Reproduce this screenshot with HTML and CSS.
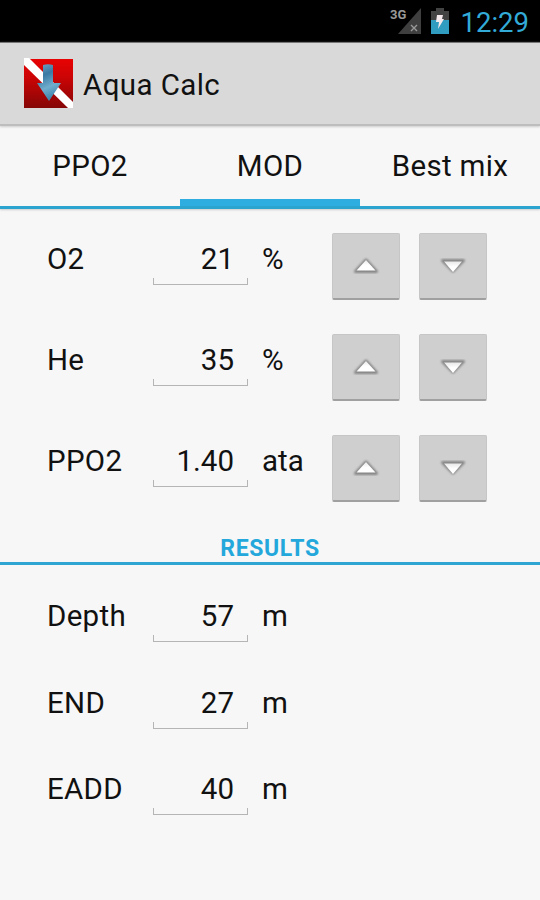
FILE: index.html
```html
<!DOCTYPE html>
<html lang="en">
<head>
  <meta charset="UTF-8" />
  <meta name="viewport" content="width=device-width, initial-scale=1.0" />
  <title>Aqua Calc</title>
  <link rel="stylesheet" href="styles.css">
</head>
<body>
  <div class="status-bar">
    <svg class="signal" width="32" height="28" viewBox="0 0 32 28">
      <path d="M31 1V27H8z" fill="#3f3f3f" />
      <path d="M21 18l6 6M27 18l-6 6" stroke="#999" stroke-width="1.4" />
      <text x="0" y="12" class="network">3G</text>
    </svg>
    <svg class="battery" width="18" height="27" viewBox="0 0 18 27">
      <path d="M0 3h5V0h8v3h5v10H0z" fill="#434343" />
      <path d="M0 12h18v14H0z" fill="#2f9cc0" />
      <path d="M6 7h6l-1 4h2l-6 10 1-7H5z" fill="#f4e9ec" />
    </svg>
    <span class="clock">12:29</span>
  </div>

  <header class="action-bar">
    <svg class="app-icon" width="51" height="51" viewBox="0 0 51 51">
      <defs>
        <linearGradient id="flag" x1="0" y1="0" x2="0" y2="1">
          <stop offset="0" stop-color="#e80203" />
          <stop offset="0.4" stop-color="#c90405" />
          <stop offset="1" stop-color="#850606" />
        </linearGradient>
        <linearGradient id="arrow" x1="0" y1="0" x2="0.3" y2="1">
          <stop offset="0" stop-color="#77a6c4" />
          <stop offset="0.35" stop-color="#3979a3" />
          <stop offset="0.7" stop-color="#70adcd" />
          <stop offset="1" stop-color="#4287ae" />
        </linearGradient>
      </defs>
      <rect x="1" y="1" width="49" height="49" fill="url(#flag)" />
      <path d="M1 0h5L50 44v6h-5L1 7z" fill="#fff" />
      <path d="M20 7q5-1.500 10 0V25h8L26 43 14 25h6z" fill="url(#arrow)" />
    </svg>
    <h1>Aqua Calc</h1>
  </header>

  <nav class="tabs">
    <div class="tab">PPO2</div>
    <div class="tab active">MOD</div>
    <div class="tab">Best mix</div>
  </nav>

  <svg class="symbols" width="0" height="0">
    <defs>
      <linearGradient id="shine" x1="0" y1="0" x2="0" y2="1">
        <stop offset="0" stop-color="#e8e8e8" />
        <stop offset="0.5" stop-color="#fff" />
      </linearGradient>
      <filter id="soft" x="-20%" y="-20%" width="140%" height="140%">
        <feGaussianBlur stdDeviation="0.8" />
      </filter>
      <symbol id="up" viewBox="0 0 28 20">
        <path d="M14 4L24.500 15.500H3.500z" fill="#858585" stroke="#858585" stroke-width="3" stroke-linejoin="round" filter="url(#soft)" />
        <path d="M14 4L23.500 14.500H4.500z" fill="url(#shine)" />
      </symbol>
      <symbol id="down" viewBox="0 0 28 20">
        <path d="M14 15L24.500 4.500H3.500z" fill="#858585" stroke="#858585" stroke-width="3" stroke-linejoin="round" filter="url(#soft)" />
        <path d="M14 16L23 5.500H5z" fill="url(#shine)" />
      </symbol>
    </defs>
  </svg>

  <main>
    <section class="inputs">
      <div class="row">
        <span class="label">O2</span>
        <span class="value">21</span>
        <span class="unit">%</span>
        <button><svg width="28" height="20"><use href="#up" /></svg></button>
        <button><svg width="28" height="20"><use href="#down" /></svg></button>
      </div>
      <div class="row">
        <span class="label">He</span>
        <span class="value">35</span>
        <span class="unit">%</span>
        <button><svg width="28" height="20"><use href="#up" /></svg></button>
        <button><svg width="28" height="20"><use href="#down" /></svg></button>
      </div>
      <div class="row">
        <span class="label">PPO2</span>
        <span class="value">1.40</span>
        <span class="unit">ata</span>
        <button><svg width="28" height="20"><use href="#up" /></svg></button>
        <button><svg width="28" height="20"><use href="#down" /></svg></button>
      </div>
    </section>

    <h2>RESULTS</h2>

    <section class="results">
      <div class="row">
        <span class="label">Depth</span>
        <span class="value">57</span>
        <span class="unit">m</span>
      </div>
      <div class="row">
        <span class="label">END</span>
        <span class="value">27</span>
        <span class="unit">m</span>
      </div>
      <div class="row">
        <span class="label">EADD</span>
        <span class="value">40</span>
        <span class="unit">m</span>
      </div>
    </section>
  </main>
</body>
</html>
```

FILE: styles.css
```css
* {
  box-sizing: border-box;
}

body {
  margin: 0;
  height: 900px;
  overflow: hidden;
  font-family: Roboto, sans-serif;
  font-size: 29.5px;
  color: #111;
  background-color: #f7f7f7;
}

.status-bar {
  height: 42px;
  display: flex;
  align-items: flex-start;
  justify-content: flex-end;
  padding-right: 11px;
  background-color: #000;
}

.signal {
  margin-top: 7px;
}

.network {
  font-size: 13px;
  font-weight: bold;
  fill: #999;
}

.battery {
  margin: 8px 12px 0 9px;
}

.clock {
  font-size: 27.5px;
  line-height: 46px;
  color: #33abd9;
}

.action-bar {
  height: 84px;
  display: flex;
  align-items: center;
  padding: 0 0 1px 23px;
  background-color: #d9d9d9;
  border-top: 1px solid #777;
  border-bottom: 2px solid #bdbdbd;
  box-shadow: 0 1px 2px #ccc;
}

h1 {
  margin: 3px 0 0 9px;
  font-size: 29.5px;
  font-weight: normal;
  letter-spacing: 0.4px;
}

.tabs {
  height: 83px;
  display: grid;
  grid-template-columns: 1fr 1fr 1fr;
  border-bottom: 3px solid #2ba4cf;
  box-shadow: 0 1px 2px #ccc;
}

.tab {
  height: 80px;
  line-height: 80px;
  text-align: center;
  letter-spacing: 0.3px;
}

.tab.active {
  background: linear-gradient(#2dade0, #2dade0) bottom / 100% 7px no-repeat;
}

.symbols {
  display: block;
}

.inputs {
  padding-top: 24px;
}

.row {
  display: grid;
  grid-template-columns: 106px 95px 70px 68px 68px;
  align-items: start;
  padding-left: 47px;
  line-height: 52px;
}

.inputs .row {
  height: 101px;
}

.results .row {
  height: 86.5px;
}

.label {
  letter-spacing: 0.3px;
}

.value {
  height: 52px;
  padding-right: 14px;
  text-align: right;
  border-bottom: 1px solid #b5b5b5;
  background: linear-gradient(#b5b5b5, #b5b5b5) left bottom / 1px 6px no-repeat,
    linear-gradient(#b5b5b5, #b5b5b5) right bottom / 1px 6px no-repeat;
}

.unit {
  padding-left: 14px;
}

button {
  display: flex;
  align-items: center;
  justify-content: center;
  width: 68px;
  height: 67px;
  margin-left: 14px;
  padding: 0;
  background-color: #cfcfcf;
  border: 1px solid #c6c6c6;
  border-bottom: 2px solid #a0a0a0;
  border-radius: 2px;
}

button + button {
  margin-left: 33px;
}

h2 {
  height: 29px;
  margin: 0;
  font-size: 23px;
  line-height: 25px;
  letter-spacing: 0.6px;
  text-align: center;
  color: #24a8dc;
  border-bottom: 3px solid #2fa5d3;
}

.results {
  padding-top: 25px;
}
```
